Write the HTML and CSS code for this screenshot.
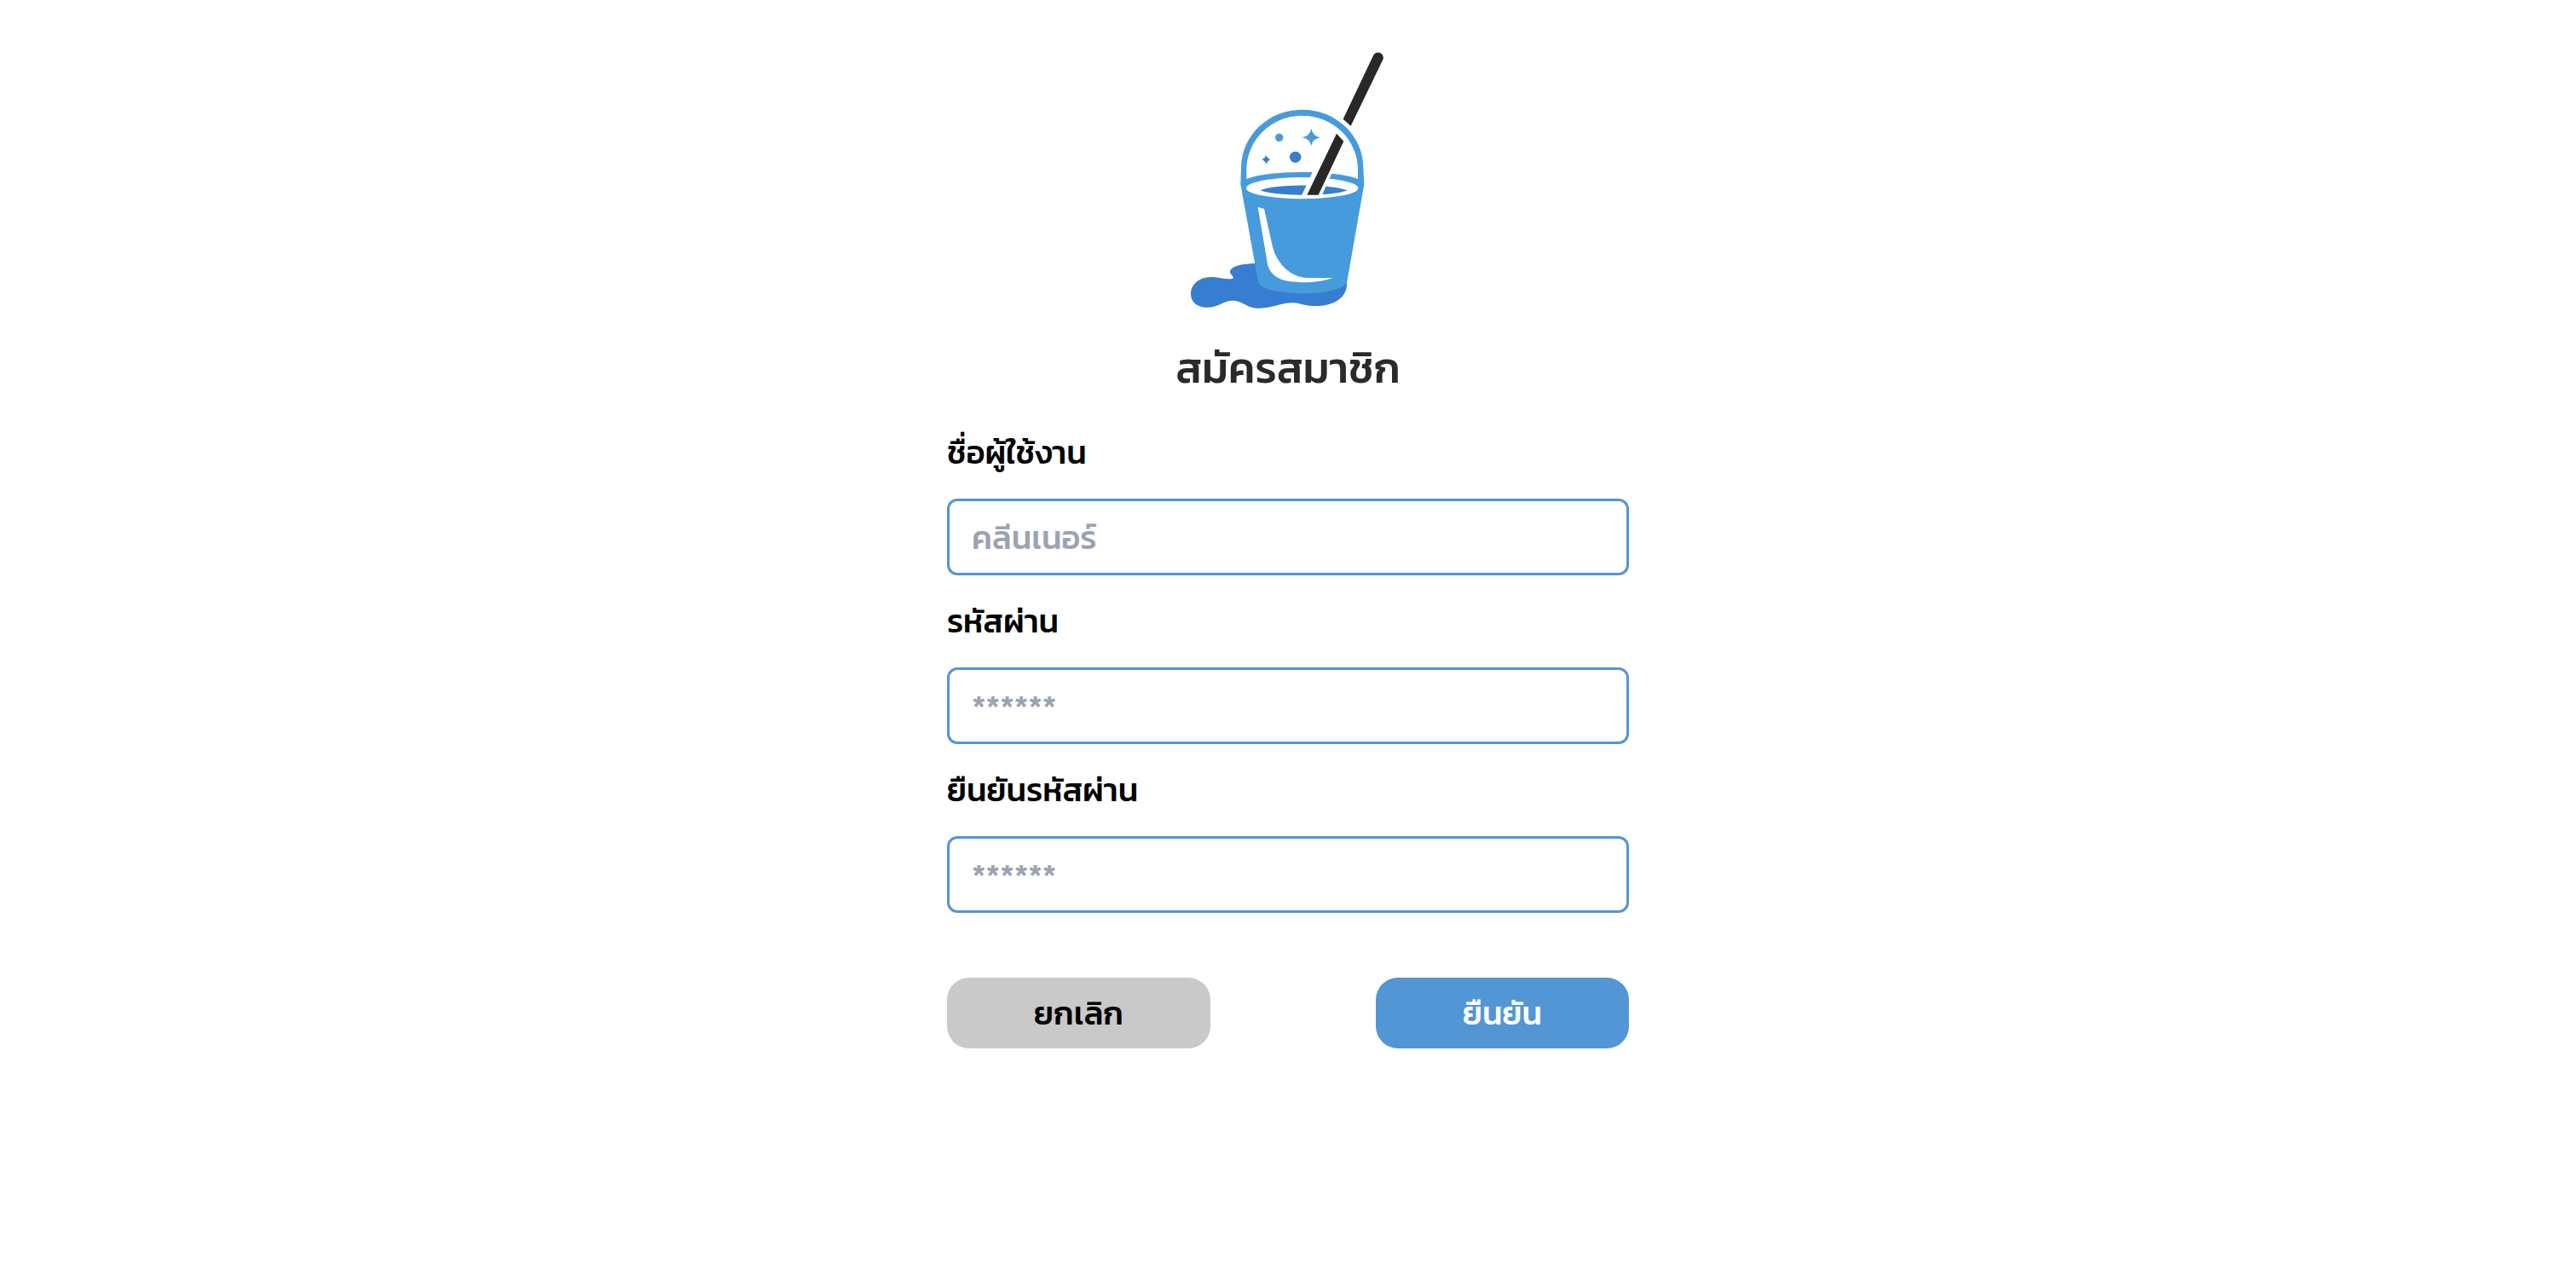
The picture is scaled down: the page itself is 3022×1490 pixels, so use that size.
FILE: index.html
```html
<!DOCTYPE html>
<html lang="th">
<head>
<meta charset="utf-8">
<meta name="viewport" content="width=device-width, initial-scale=1">
<title>สมัครสมาชิก</title>
<link rel="stylesheet" href="styles.css">
</head>
<body>
<main class="signup">
  <svg class="logo" viewBox="3 0 780 1020" aria-hidden="true">
    <path class="deep" d="M280 807C240 808 188 815 189 838C190 848 204 852 200 860C180 866 150 855 122 855C80 856 51 880 51 915C51 945 75 962 106 962C150 962 165 938 198 938C235 938 245 965 292 965C340 965 365 946 406 946C440 946 450 957 490 957C550 957 603 930 600 875L300 850Z"/>
    <path class="sky" d="M226 528L228 470A215 204 0 0 1 658 470L661 528L600 876C570 925 320 925 289 876Z"/>
    <path class="paper" d="M247 510V478A196 191 0 0 1 639 478V510C560 478 326 478 247 510Z"/>
    <ellipse class="paper" cx="443" cy="542" rx="197" ry="38"/>
    <path class="deep" d="M295 550C350 527 540 527 602 550C550 572 350 572 295 550Z"/>
    <path class="paper" d="M287 609L309 615L337 740C352 810 405 856 460 858L551 858C500 878 410 878 371 864C340 852 325 830 321 810Z"/>
    <path class="paper" d="M484 475L554 475L511 571L440 571Z"/>
    <path class="ink" d="M564 350L589 377L500 566L460 566Z"/>
    <path class="ink" d="M693 76A18 18 0 0 1 727 90L614 323L587 299Z"/>
    <circle class="sky" cx="362" cy="364" r="14"/>
    <circle class="deep" cx="419" cy="433" r="20"/>
    <path class="sky" d="M475 332Q480 359 507 364Q480 369 475 393Q470 369 443 364Q470 359 475 332Z"/>
    <path class="deep" d="M316 427Q320 438 332 442Q320 446 316 458Q312 446 301 442Q312 438 316 427Z"/>
  </svg>
  <h1 class="title">สมัครสมาชิก</h1>
  <form class="form">
    <label class="label" for="username">ชื่อผู้ใช้งาน</label>
    <input class="input" id="username" type="text" placeholder="คลีนเนอร์">
    <label class="label" for="password">รหัสผ่าน</label>
    <input class="input" id="password" type="password" placeholder="******">
    <label class="label" for="confirm">ยืนยันรหัสผ่าน</label>
    <input class="input" id="confirm" type="password" placeholder="******">
    <div class="actions">
      <button class="button cancel" type="button">ยกเลิก</button>
      <button class="button submit" type="submit">ยืนยัน</button>
    </div>
  </form>
</main>
</body>
</html>
```
FILE: styles.css
```css
* { box-sizing: border-box; }

body {
  margin: 0;
  background: #fff;
  color: #000;
  font-family: Kanit, "Noto Sans Thai", "Noto Sans", sans-serif;
  font-weight: 500;
}

.signup {
  display: flex;
  flex-direction: column;
  align-items: center;
  padding: 40px 24px;
}

.logo { width: 260px; height: 340px; }
.deep { fill: #377dd1; }
.sky { fill: #469bdc; }
.paper { fill: #fff; }
.ink { fill: #282828; }

.title {
  margin: 16px 0 33px;
  color: #2a2a2a;
  font-size: 50px;
  font-weight: 500;
  line-height: 72px;
}

.form {
  display: flex;
  flex-direction: column;
  gap: 24px;
  width: 100%;
  max-width: 800px;
}

.label {
  align-self: flex-start;
  font-size: 38px;
  line-height: 60px;
}

.input {
  width: 100%;
  height: 90px;
  padding: 0 26px;
  border: 3px solid #5296d5;
  border-radius: 12px;
  background: #fff;
  font: inherit;
  font-size: 38px;
}

.input::placeholder { color: #9ca3af; opacity: 1; }

.actions {
  display: flex;
  justify-content: space-between;
  margin-top: 52px;
}

.button {
  height: 83px;
  padding: 0;
  border: 0;
  border-radius: 26px;
  font: inherit;
  font-size: 38px;
}

.cancel { width: 309px; background: #c9c9c9; color: #000; }
.submit { width: 297px; background: #5296d5; color: #fff; }
```
